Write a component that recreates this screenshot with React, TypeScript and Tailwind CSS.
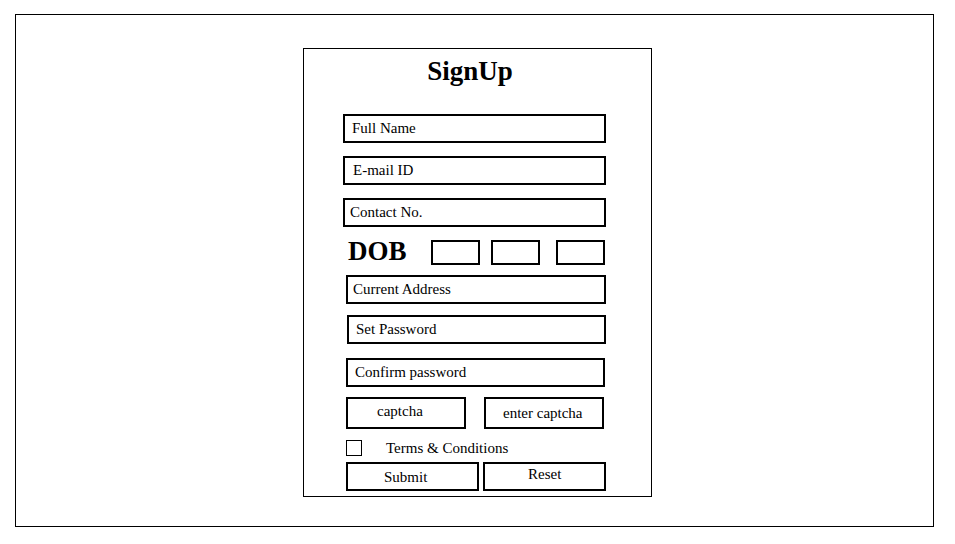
import React from 'react';

const serif = "font-['Liberation_Serif','Times_New_Roman',serif]";

const Field: React.FC<{ label: string; ml: string; w: string; mt: string; pl: string }> = ({ label, ml, w, mt, pl }) => (
  <div className={`${mt} ${ml} ${w} h-[29px] border-2 border-black flex items-center ${pl}`}>
    <span className="text-[15px] leading-[17px] text-black">{label}</span>
  </div>
);

export default function App() {
  return (
    <div className={`w-[955px] h-[544px] bg-white pt-[14px] pl-[15px] ${serif}`}>
      {/* Outer frame */}
      <div className="w-[919px] h-[513px] border border-black pt-[33px] pl-[287px]">
        {/* Signup card */}
        <div className="w-[349px] h-[449px] border border-black flex flex-col">
          <h1 className="mt-[9px] pr-[15px] text-center text-[27px] leading-[27px] font-bold text-black">
            SignUp
          </h1>

          <Field label="Full Name" mt="mt-[29px]" ml="ml-[39px]" w="w-[263px]" pl="pl-[7px]" />
          <Field label="E-mail ID" mt="mt-[13px]" ml="ml-[39px]" w="w-[263px]" pl="pl-[8px]" />
          <Field label="Contact No." mt="mt-[13px]" ml="ml-[39px]" w="w-[263px]" pl="pl-[5px]" />

          {/* DOB row */}
          <div className="mt-[13px] flex items-start h-[25px]">
            <span className="ml-[44px] w-[83px] text-[27px] leading-[22px] font-bold text-black">DOB</span>
            <div className="w-[49px] h-[25px] border-2 border-black" />
            <div className="ml-[11px] w-[49px] h-[25px] border-2 border-black" />
            <div className="ml-[16px] w-[49px] h-[25px] border-2 border-black" />
          </div>

          <Field label="Current Address" mt="mt-[10px]" ml="ml-[42px]" w="w-[260px]" pl="pl-[5px]" />
          <Field label="Set Password" mt="mt-[11px]" ml="ml-[43px]" w="w-[259px]" pl="pl-[7px]" />
          <Field label="Confirm password" mt="mt-[14px]" ml="ml-[42px]" w="w-[259px]" pl="pl-[7px]" />

          {/* Captcha row */}
          <div className="mt-[10px] flex">
            <div className="ml-[42px] w-[120px] h-[32px] border-2 border-black flex items-center pl-[29px] pb-[3px]">
              <span className="text-[15px] leading-[17px]">captcha</span>
            </div>
            <div className="ml-[18px] w-[120px] h-[32px] border-2 border-black flex items-center pl-[17px]">
              <span className="text-[15px] leading-[17px]">enter captcha</span>
            </div>
          </div>

          {/* Terms */}
          <div className="mt-[11px] flex items-start">
            <div className="ml-[42px] w-[16px] h-[16px] border border-black" />
            <span className="ml-[24px] text-[15px] leading-[16px]">Terms &amp; Conditions</span>
          </div>

          {/* Buttons */}
          <div className="mt-[6px] flex">
            <button className="ml-[42px] w-[133px] h-[29px] border-2 border-black flex items-center pl-[36px] pt-[2px] text-[15px] leading-[17px] bg-white">
              Submit
            </button>
            <button className="ml-[4px] w-[123px] h-[29px] border-2 border-black flex items-center pl-[43px] pb-[5px] text-[15px] leading-[17px] bg-white">
              Reset
            </button>
          </div>
        </div>
      </div>
    </div>
  );
}
